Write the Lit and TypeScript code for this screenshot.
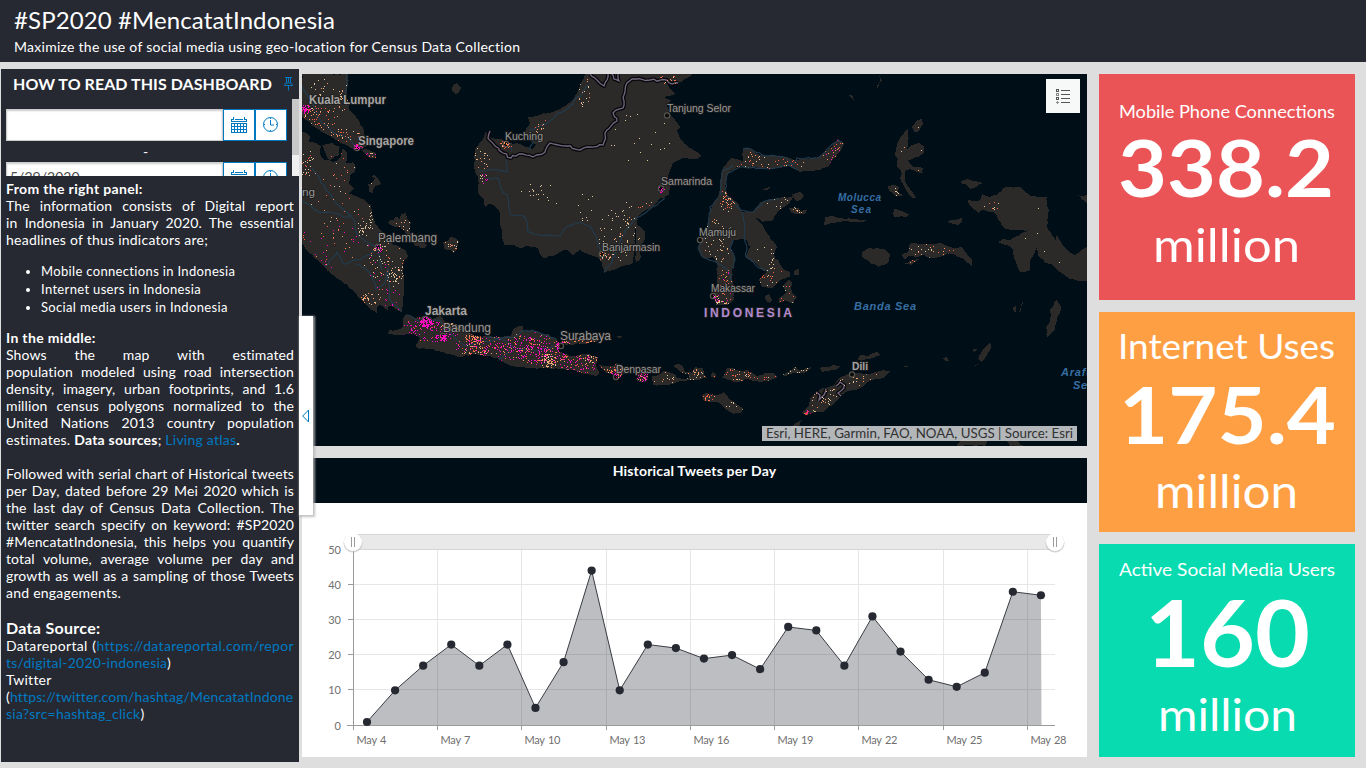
import { LitElement, html, svg, css } from "lit";
import { customElement } from "lit/decorators.js";

type Pt = [number, number];

/* Small deterministic generator, so that the map is the same on every load. */
function seeded(seed: number) {
  let s = seed >>> 0;
  return () => {
    s = (s * 1664525 + 1013904223) >>> 0;
    return s / 4294967296;
  };
}

function parse(s: string): Pt[] {
  return s.trim().split(/\s+/).map((p) => p.split(",").map(Number) as Pt);
}

/* Breaks straight runs into short irregular steps, as a coastline or a border has. */
function coast(s: string, seed: number, closed = true, jag = 1.7): string {
  const rnd = seeded(seed * 7919 + 13);
  const pts = parse(s);
  const out: Pt[] = [];
  pts.forEach((a, i) => {
    out.push(a);
    if (!closed && i === pts.length - 1) return;
    const b = pts[(i + 1) % pts.length];
    const len = Math.hypot(b[0] - a[0], b[1] - a[1]);
    const n = Math.max(1, Math.round(len / 3.5));
    for (let k = 1; k < n; k++) {
      const t = k / n;
      const j = len > 80 ? 0 : jag;
      out.push([a[0] + (b[0] - a[0]) * t + (rnd() - 0.5) * j, a[1] + (b[1] - a[1]) * t + (rnd() - 0.5) * j]);
    }
  });
  return "M" + out.map((p) => p[0].toFixed(1) + " " + p[1].toFixed(1)).join("L") + (closed ? "Z" : "");
}

const LAND = [
  // Malay peninsula
  "302,74 348,74 348,84 347,95 349,110 355,115 359,121 363,128 366,138 367,146 362,149 357,150 348,146 338,141 330,136 316,128 308,121 302,117",
  "362,150 369,150 376,153 376,158 371,158 365,154",
  // Sumatra
  "302,132 307,133 310,137 309,142 316,143 321,146 320,154 325,160 333,162 340,158 343,148 347,152 346,163 353,162 356,168 350,176 349,184 354,188 349,194 358,197 366,201 371,205 372,215 375,223 378,227 383,233 389,240 393,245 400,247 406,250 408,256 404,260 403,266 404,284 403,300 402,312 396,309 390,305 388,310 380,305 377,307 377,313 372,310 363,302 353,290 343,283 333,275 323,266 320,262 306,250 302,243",
  "322,145 332,143 340,147 338,156 330,160 325,152",
  "368,184 373,182 375,178 371,177 374,174 378,178 381,184 375,186 372,193 369,192",
  "388,223 395,217 400,219 401,214 406,213 407,218 411,222 410,230 414,238 422,241 427,245 424,248 415,246 410,238 405,232 400,227 395,227",
  "443,242 449,240 450,237 455,238 459,242 457,250 453,253 450,250 444,249",
  "453,85 457,83 461,88 459,93 455,94 452,89",
  // Borneo
  "585,74 590,74 693,74 687,78 677,83 668,85 672,90 675,94 664,98 671,100 667,106 670,113 675,120 681,127 677,131 680,139 690,148 697,152 702,156 697,159 683,158 673,163 669,173 668,180 670,187 669,195 660,198 655,205 643,212 637,217 637,223 635,237 634,250 633,263 620,267 604,273 602,263 597,257 590,255 580,250 573,255 567,250 560,252 553,256 543,258 540,255 538,248 529,246 522,248 514,245 504,245 502,230 500,223 499,210 495,206 489,204 485,207 484,200 478,192 478,180 474,167 475,150 483,140 485,132 492,138 503,140 512,144 520,144 532,149 536,144 532,143 525,132 530,123 528,117 540,115 560,109 567,105 575,96 580,85",
  "637,225 645,231 645,238 640,248 640,260 636,262 635,250",
  // Sulawesi
  "743,148 750,149 760,155 775,156 787,157 794,160 817,158 824,153 832,147 838,139 844,143 842,148 835,158 827,167 820,170 800,172 790,166 770,169 755,167 737,167 728,173 725,187 727,195 737,202 742,212 752,212 760,202 780,198 793,196 790,202 777,213 773,220 763,222 756,218 767,233 777,247 774,255 782,267 790,272 790,277 780,280 773,288 762,287 759,280 767,272 757,265 746,257 750,247 747,240 733,240 730,247 735,260 732,270 733,283 734,300 727,305 717,305 713,297 717,283 717,263 712,257 703,258 698,250 703,237 707,227 710,215 712,207 718,197 720,180 723,168 732,158 743,161",
  "783,286 789,280 792,283 792,292 797,297 793,303 786,300 779,303 779,298 786,292",
  "765,296 769,294 772,300 770,303 766,301",
  "794,271 799,269 799,275 794,275",
  "792,194 800,192 804,195 801,200 796,201",
  "789,208 795,207 800,211 807,210 805,214 796,214 791,213",
  "762,190 770,187 774,185 767,190",
  "825,217 832,216 839,218 852,219 868,221 852,222 840,222 832,223 824,225",
  // Java and Madura
  "406,314 415,318 425,316 433,319 440,316 447,323 463,325 468,333 478,336 487,337 503,337 511,336 513,329 519,326 523,326 524,332 532,330 541,334 548,334 555,338 559,343 559,352 570,356 577,356 588,354 598,358 596,366 599,373 596,376 584,374 574,370 560,369 545,368 530,368 512,366 500,360 497,358 480,355 473,354 458,357 447,354 443,352 433,349 417,348 416,345 420,338 413,334 403,335 388,334 389,330 397,330 403,327 403,320",
  "560,342 575,338 595,337 598,341 588,343 566,345",
  // Lesser Sunda islands
  "598,365 607,366 613,366 617,363 625,367 630,370 624,374 617,379 615,375 606,372",
  "635,374 641,371 648,373 648,380 645,382 636,380 638,377",
  "652,376 660,374 664,371 671,373 675,374 677,378 683,379 690,377 688,374 680,372 673,366 677,364 682,365 685,372 692,373 695,367 703,368 704,374 707,378 698,380 690,380 677,382 673,384 661,385 653,385",
  "712,372 716,376 714,378 711,377",
  "722,378 727,368 733,368 740,371 747,370 757,376 765,373 773,373 778,377 770,380 760,382 745,379 738,382 728,380",
  "782,375 790,371 795,367 799,370 806,368 812,367 807,372 798,373 791,374 786,376",
  "820,368 828,367 833,365 841,366 837,369 828,371 822,372",
  "702,395 707,393 716,395 724,392 731,400 743,408 740,413 734,414 727,410 717,402 704,401",
  "802,413 808,407 810,398 823,388 833,386 841,377 853,373 870,374 883,370 891,371 885,377 870,381 860,388 845,392 838,400 833,405 823,412 815,412 806,415",
  "790,427 796,423 802,420 799,426 794,429",
  "858,360 860,355 868,356 877,352 881,355 870,359 864,360",
  // Maluku islands
  "908,129 908,145 906,151 912,145 919,143 924,146 924,152 918,157 908,160 913,167 923,168 922,172 927,173 917,172 910,169 905,171 905,181 910,189 916,198 912,198 905,188 901,181 901,171 897,167 898,160 895,155 897,145 900,138 905,131",
  "912,127 917,120 922,119 923,124 918,132 914,132",
  "888,186 893,185 899,187 898,192 903,196 895,196 893,193 889,191",
  "894,209 902,211 911,215 906,217 894,217",
  "879,75 882,81 877,85 877,91 880,79",
  "849,95 852,95 854,101 851,98",
  "862,252 870,248 884,249 890,255 889,262 878,267 870,263 863,258",
  "902,254 908,252 911,243 925,244 941,243 953,248 961,247 967,254 972,260 972,266 965,261 955,255 947,253 942,256 932,258 924,255 918,257 909,256 905,259",
  "905,264 912,260 921,259 915,262 912,264",
  "947,222 955,220 962,218 962,222 958,225 953,224",
  "960,182 968,179 975,181 983,183 976,187 970,189 966,184",
  // Papua
  "968,200 976,201 981,199 982,194 990,197 997,195 1003,188 1011,187 1020,187 1030,196 1047,197 1047,206 1049,211 1047,220 1048,229 1056,241 1057,235 1061,242 1066,249 1075,255 1087,247 1087,281 1070,279 1060,272 1053,265 1045,263 1038,256 1037,247 1035,252 1030,262 1030,270 1020,272 1014,258 1013,250 1007,245 998,242 1003,239 1010,240 1020,235 1028,230 1015,230 1005,229 998,220 996,214 987,211 982,210 978,213 969,205",
  "1076,194 1082,196 1087,195 1087,203 1083,200",
  "1057,300 1061,309 1057,320 1055,330 1050,334 1047,337 1046,328 1050,320 1050,309",
  "1022,303 1024,300 1021,310 1019,312",
  "1013,307 1016,306 1016,312 1014,312",
  "990,342 991,348 987,355 982,362 978,359 983,349",
  "942,358 947,357 949,361 945,361",
  "903,366 912,366 905,367",
  "973,349 979,348 974,352",
  "972,368 979,364 974,367",
  "957,444 962,439 975,440 987,440 985,446 957,446",
  "1007,441 1015,440 1024,446 1010,446",
  "617,336 624,337 618,338",
];

const RIVERS = [
  "302,86 312,102 320,120 335,133 350,139 356,149",
  "347,74 346,90 342,100",
  "312,168 320,179 326,190 335,202 348,213 354,220 357,234 368,243 378,247 380,258 382,270",
  "302,201 310,205 320,213 332,212 343,217 352,215",
  "376,250 366,256 356,260 344,264 337,252 330,260 325,266",
  "356,264 365,268 372,276 376,289 384,284 388,268 390,300 402,311",
  "478,171 492,170 507,172 507,154",
  "487,178 499,179 500,186 508,198 510,214 525,217 528,232 540,235 560,236 567,226 580,222 590,226 597,240 604,257",
  "530,150 534,140 530,130 548,122 556,115 567,109 580,96 588,85",
  "507,141 512,152",
  "604,272 612,262 625,231 634,220 650,209 665,198",
  "743,149 751,149 762,155 787,158 792,165 797,158 818,158 838,140 843,143",
  "798,170 788,165 770,169 740,167 728,173 725,190",
  "718,198 710,207 709,227 704,239 698,248 704,258 716,262 728,270 732,283",
  "733,165 722,172 720,195",
  "727,196 741,210 753,212 763,202 779,198",
  "742,212 745,224 744,236 747,248 746,257 759,268 770,271",
  "733,240 730,248 735,260 733,269",
  "407,315 420,322 440,320 455,338 465,346 480,343 498,339 511,344 508,353 499,360",
  "486,337 501,338 513,338 522,331 532,330 548,336 557,340",
  "511,346 523,349 535,351 550,348 558,343",
];

const BORDERS = [
  "490,131 488,138 495,146 503,153 511,158 519,154 533,157 545,152 550,143 566,146 580,150 590,147 603,145 607,130 617,121 613,113 623,108 625,92 627,83 632,79 650,80 667,80 672,84 678,83",
  "590,74 597,80 604,86 608,74",
  "612,74 614,79 619,81 618,74",
  "816,392 820,395 819,400 824,395 826,389",
  "836,386 840,382 844,385 842,390 838,393 841,396",
];

/* x, y, spread x, spread y, amount, palette letters */
type Cluster = [number, number, number, number, number, string];
const CLUSTERS: Cluster[] = [
  [305, 109, 6, 5, 64, "mmmr"],
  [314, 118, 24, 12, 60, "torr"],
  [322, 95, 22, 20, 36, "tto"],
  [343, 98, 6, 16, 22, "to"],
  [335, 134, 24, 8, 40, "tor"],
  [357, 148, 6, 4, 40, "mmr"],
  [372, 154, 8, 4, 22, "trom"],
  [305, 162, 9, 14, 40, "ttr"],
  [340, 190, 40, 40, 52, "orrt"],
  [330, 242, 30, 26, 44, "orm"],
  [363, 228, 10, 8, 30, "tt"],
  [371, 208, 3, 16, 22, "tt"],
  [378, 248, 5, 4, 22, "otm"],
  [384, 262, 22, 28, 76, "orttm"],
  [395, 275, 8, 8, 34, "tt"],
  [367, 298, 14, 7, 44, "ot"],
  [391, 300, 12, 13, 18, "m"],
  [404, 226, 14, 12, 22, "to"],
  [452, 244, 8, 8, 18, "to"],
  [506, 144, 6, 5, 40, "toor"],
  [483, 178, 4, 5, 16, "ttm"],
  [482, 156, 8, 14, 20, "tto"],
  [541, 126, 7, 8, 12, "tor"],
  [538, 192, 18, 10, 18, "t"],
  [585, 90, 9, 18, 22, "to"],
  [620, 236, 22, 28, 60, "tto"],
  [604, 256, 7, 6, 20, "tro"],
  [648, 208, 10, 7, 12, "tor"],
  [640, 140, 30, 30, 18, "t"],
  [661, 189, 3, 3, 8, "m"],
  [668, 176, 3, 6, 6, "m"],
  [670, 79, 12, 6, 16, "tor"],
  [593, 213, 46, 30, 20, "t"],
  [426, 322, 6, 5, 100, "m"],
  [443, 337, 4, 4, 46, "m"],
  [430, 328, 30, 15, 150, "mmmmr"],
  [455, 326, 15, 4, 60, "to"],
  [475, 338, 11, 6, 80, "oor"],
  [475, 350, 14, 6, 46, "ort"],
  [500, 347, 46, 14, 210, "mmmmro"],
  [540, 348, 34, 16, 190, "mmmro"],
  [548, 361, 8, 8, 90, "to"],
  [560, 346, 4, 6, 56, "mm"],
  [578, 360, 22, 14, 150, "ormmr"],
  [591, 357, 8, 6, 34, "to"],
  [578, 340, 20, 4, 56, "oor"],
  [614, 370, 14, 8, 76, "tor"],
  [616, 375, 6, 5, 26, "m"],
  [642, 376, 8, 6, 50, "mmo"],
  [665, 378, 16, 7, 14, "to"],
  [695, 374, 14, 7, 36, "to"],
  [745, 375, 32, 7, 60, "torr"],
  [796, 371, 18, 5, 30, "t"],
  [707, 397, 7, 4, 18, "or"],
  [730, 405, 14, 8, 9, "t"],
  [824, 400, 20, 13, 50, "tto"],
  [860, 379, 26, 8, 22, "to"],
  [806, 413, 4, 3, 14, "rm"],
  [715, 300, 5, 6, 44, "mtt"],
  [725, 290, 12, 22, 60, "orm"],
  [722, 305, 10, 4, 36, "tt"],
  [718, 240, 16, 22, 62, "tto"],
  [727, 200, 8, 12, 44, "tor"],
  [776, 165, 40, 6, 36, "torr"],
  [755, 155, 10, 8, 14, "to"],
  [835, 150, 14, 14, 46, "rmo"],
  [780, 202, 14, 10, 16, "t"],
  [770, 262, 24, 24, 22, "t"],
  [770, 275, 14, 12, 26, "tor"],
  [787, 294, 10, 12, 22, "tr"],
  [798, 210, 10, 5, 16, "to"],
  [910, 150, 20, 30, 14, "to"],
  [898, 193, 10, 6, 12, "t"],
  [930, 249, 26, 8, 26, "tor"],
  [910, 262, 8, 3, 12, "or"],
  [990, 205, 10, 6, 9, "tr"],
  [1040, 225, 45, 45, 9, "t"],
];
const SWATCH: Record<string, string> = { t: "#dfc39a", o: "#f5905f", r: "#f75a3f", m: "#ff06c0" };

/* Groups the population pixels into one path for each colour. */
function population() {
  const rnd = seeded(2020);
  const d: Record<string, string> = { t: "", o: "", r: "", m: "" };
  for (const [cx, cy, rx, ry, n, mix] of CLUSTERS) {
    for (let i = 0; i < n; i++) {
      const a = rnd() * Math.PI * 2;
      const r = Math.pow(rnd(), 0.62);
      const x = Math.round(cx + Math.cos(a) * r * rx);
      const y = Math.round(cy + Math.sin(a) * r * ry);
      d[mix[Math.floor(rnd() * mix.length)]] += `M${x} ${y}h1v1h-1z`;
    }
  }
  return d;
}

type Label = [string, number, number, number, number, string];
const LABELS: Label[] = [
  ["Kuala Lumpur", 309, 104, 77, 12, "city big"],
  ["Singapore", 358, 145, 56, 12, "city big"],
  ["Kuching", 505, 140, 38, 11, "city"],
  ["Palembang", 378, 242, 59, 12, "city"],
  ["ng", 302, 196, 13, 11, "city"],
  ["Tanjung Selor", 667, 112, 64, 11, "city"],
  ["Samarinda", 661, 185, 51, 11, "city"],
  ["Banjarmasin", 602, 251, 58, 11, "city"],
  ["Mamuju", 699, 236, 37, 11, "city"],
  ["Makassar", 711, 292, 44, 11, "city"],
  ["Jakarta", 425, 315, 42, 12, "city big"],
  ["Bandung", 443, 332, 48, 12, "city"],
  ["Surabaya", 560, 340, 51, 12, "city"],
  ["Denpasar", 616, 373, 45, 11, "city"],
  ["Dili", 852, 370, 16, 11, "city big"],
  ["INDONESIA", 704, 317, 88, 12, "country"],
  ["Molucca", 838, 201, 43, 10, "sea"],
  ["Sea", 851, 213, 20, 10, "sea"],
  ["Banda Sea", 854, 310, 62, 11, "sea"],
  ["Arafura", 1061, 376, 44, 11, "sea"],
  ["Sea", 1073, 389, 21, 11, "sea"],
];

const TOWNS: Pt[] = [[357, 148], [506, 144], [378, 247], [667, 115.5], [661, 188.5], [602, 254], [700, 240], [713, 296], [425, 319], [443, 336], [561, 346], [616, 377], [852, 374.5]];

@customElement("population-map")
export class PopulationMap extends LitElement {
  static styles = css`
    :host { display: block; position: relative; background: #000e18; overflow: hidden; }
    svg { display: block; }
    .land { fill: #2b2a29; }
    .river { fill: none; stroke: #223c4e; stroke-width: 1.1; }
    .border-edge { fill: none; stroke: #08080c; stroke-width: 4; stroke-linejoin: round; }
    .border-line { fill: none; stroke: #75697f; stroke-width: 1.3; }
    .town { fill: #0b0b0b; stroke: #55544d; stroke-width: 1.2; }
    text { font-family: "Liberation Sans", Arial, sans-serif; paint-order: stroke; stroke: #1d1d1d; stroke-width: 2px; stroke-linejoin: round; }
    .city { fill: #979797; stroke-opacity: .85; }
    .big { font-weight: 700; fill: #a5a5a5; }
    .country { fill: #b08bd0; font-weight: 700; }
    .sea { fill: #376fa3; font-style: italic; font-weight: 700; stroke: #000e18; stroke-width: 1px; }
    .legend { position: absolute; right: 7px; top: 5px; width: 34px; height: 34px; background: #f7f8f8; display: grid; place-items: center; }
    .credits { position: absolute; right: 10px; bottom: 5px; height: 15px; width: 315px; background: rgba(255,255,255,.7); }
    .credits text { font-family: Lato, sans-serif; font-size: 12.5px; fill: #323232; stroke: none; }
  `;

  render() {
    const pop = population();
    const shapes = LAND.map((s, i) => coast(s, i + 1)).join("");
    return html`
      <svg width="785" height="372" viewBox="302 74 785 372">
        <defs><clipPath id="ground"><path d=${shapes} /></clipPath></defs>
        <path class="land" shape-rendering="crispEdges" d=${shapes} />
        ${RIVERS.map((r, i) => svg`<path class="river" d=${coast(r, i + 90, false, 2)} />`)}
        ${BORDERS.map((r, i) => {
          const d = coast(r, i + 60, false, 2.6);
          return svg`<path class="border-edge" d=${d} /><path class="border-line" d=${d} />`;
        })}
        ${TOWNS.map(([x, y]) => svg`<circle class="town" cx=${x} cy=${y} r="2.6" />`)}
        <g clip-path="url(#ground)" shape-rendering="crispEdges">
          ${Object.keys(pop).map((k) => svg`<path fill=${SWATCH[k]} d=${pop[k]} />`)}
        </g>
        ${LABELS.map(([t, x, y, w, size, cls]) => svg`<text class=${cls} x=${x} y=${y} font-size=${size} textLength=${w} lengthAdjust=${cls === "country" || cls === "sea" ? "spacing" : "spacingAndGlyphs"}>${t}</text>`)}
      </svg>
      <div class="legend">
        <svg width="16" height="16" viewBox="0 0 16 16" fill="none" stroke="#555" shape-rendering="crispEdges">
          <path d="M6 2.5h9M6 6.5h9M6 10.5h9M6 14.5h9" />
          <path d="M1.5 1.5h2v2h-2zM1.5 9.5h2v2h-2z" />
          <path stroke="#8b8b8b" d="M1.5 5.5h2v2h-2zM2.5 13v3M1 14.5h3" />
        </svg>
      </div>
      <div class="credits">
        <svg width="315" height="15"><text x="4" y="12" textLength="307" lengthAdjust="spacingAndGlyphs">Esri, HERE, Garmin, FAO, NOAA, USGS | Source: Esri</text></svg>
      </div>
    `;
  }
}

const TWEETS = [1, 10, 17, 23, 17, 23, 5, 18, 44, 10, 23, 22, 19, 20, 16, 28, 27, 17, 31, 21, 13, 11, 15, 38, 37];
const TICKS = [353.5, 437.5, 521.5, 606.5, 690.5, 774.5, 858.5, 943.5, 1027.5];

@customElement("tweet-chart")
export class TweetChart extends LitElement {
  static styles = css`
    :host { display: flex; flex-direction: column; background: #fff; }
    .title { height: 45px; background: #000e18; color: #fff; font: 700 14px/26px Lato, sans-serif; text-align: center; letter-spacing: .18px; }
    svg { display: block; }
    text { font: 11px Lato, sans-serif; fill: #6f6f6f; word-spacing: 1px; }
  `;

  render() {
    const y = (v: number) => 725.5 - v * 3.52;
    const pts = TWEETS.map((v, i) => [367 + i * 28.08, y(v)]);
    const line = pts.map((p) => p.join(",")).join(" ");
    return html`
      <div class="title">Historical Tweets per Day</div>
      <svg width="785" height="254" viewBox="302 503 785 254">
        <g stroke="#e6e6e6" shape-rendering="crispEdges">
          ${[10, 20, 30, 40].map((v) => svg`<path d="M353 ${Math.round(y(v)) - 0.5}H1055" />`)}
          ${TICKS.slice(1).map((x) => svg`<path d="M${x} 550V725" />`)}
        </g>
        <polygon points="367,725 ${line} 1041.5,725" fill="#262932" fill-opacity=".3" />
        <g stroke="#9b9b9b" shape-rendering="crispEdges">
          <path d="M353.5 550V726M347 725.5H1055" />
          ${[10, 20, 30, 40].map((v) => svg`<path d="M348 ${Math.round(y(v)) - 0.5}h5" />`)}
          ${TICKS.map((x) => svg`<path d="M${x} 725v5" />`)}
        </g>
        <polyline points=${line} fill="none" stroke="#3a3c44" />
        ${pts.map((p) => svg`<circle cx=${p[0]} cy=${p[1]} r="4.1" fill="#262932" />`)}
        <rect x="353.5" y="534.5" width="701" height="15" fill="#e9e9e9" stroke="#d6d6d6" />
        ${[353, 1055].map((x) => svg`
          <circle cx=${x} cy="543" r="9.6" fill="#b9b9b9" fill-opacity=".6" />
          <circle cx=${x} cy="542" r="9" fill="#fff" />
          <path d="M${x - 1.5} 537v10M${x + 1.5} 537v10" stroke="#9b9b9b" />`)}
        ${[0, 10, 20, 30, 40, 50].map((v) => svg`<text x="341" y=${y(v) + 4} text-anchor="end">${v}</text>`)}
        ${TICKS.map((x, i) => {
          const n = 4 + i * 3;
          return svg`<text x=${x + 3} y="744" textLength=${n < 10 ? 30 : 36}>${"May " + n}</text>`;
        })}
      </svg>
    `;
  }
}

interface Card {
  tone: string;
  h: number;
  /* text, left, baseline, width, size, weight */
  rows: [string, number, number, number, number, number][];
}
const CARDS: Card[] = [
  { tone: "red", h: 226, rows: [["Mobile Phone Connections", 20, 44, 216, 18, 400], ["338.2", 19, 123, 216, 79, 700], ["million", 54, 188, 147, 47, 400]] },
  { tone: "orange", h: 220, rows: [["Internet Uses", 19, 47, 217, 35, 400], ["175.4", 20, 132, 217, 79, 700], ["million", 56, 196, 143, 46, 400]] },
  { tone: "green", h: 213, rows: [["Active Social Media Users", 20, 32, 216, 18, 400], ["160", 46, 123, 165, 91, 700], ["million", 59, 187, 139, 45, 400]] },
];

type Line = [string, unknown];
const a = (t: string) => html`<a class="link">${t}</a>`;
const PANEL: Line[] = [
  ["strong", "From the right panel:"],
  ["full", "The information consists of Digital report"],
  ["full", "in Indonesia in January 2020. The essential"],
  ["", "headlines of thus indicators are;"],
  ["list", html`<ul class="items"><li>Mobile connections in Indonesia</li><li>Internet users in Indonesia</li><li>Social media users in Indonesia</li></ul>`],
  ["strong", "In the middle:"],
  ["full", "Shows the map with estimated"],
  ["full", "population modeled using road intersection"],
  ["full", "density, imagery, urban footprints, and 1.6"],
  ["full", "million census polygons normalized to the"],
  ["full", "United Nations 2013 country population"],
  ["", html`estimates. <b>Data sources</b>; ${a("Living atlas")}<b>.</b>`],
  ["", html`&nbsp;`],
  ["full", "Followed with serial chart of Historical tweets"],
  ["full", "per Day, dated before 29 Mei 2020 which is"],
  ["full", "the last day of Census Data Collection. The"],
  ["full", "twitter search specify on keyword: #SP2020"],
  ["full", "#MencatatIndonesia, this helps you quantify"],
  ["full", "total volume, average volume per day and"],
  ["full", "growth as well as a sampling of those Tweets"],
  ["", "and engagements."],
  ["", html`&nbsp;`],
  ["source", "Data Source:"],
  ["url", html`Datareportal (${a("https://datareportal.com/repor")}`],
  ["", html`${a("ts/digital-2020-indonesia")})`],
  ["", "Twitter"],
  ["tight", html`(${a("https://twitter.com/hashtag/MencatatIndone")}`],
  ["", html`${a("sia?src=hashtag_click")})`],
];

const calendar = svg`<svg width="18" height="18" viewBox="0 0 18 18" fill="none" stroke="#0079c1" shape-rendering="crispEdges">
  <path d="M1 3.5h2M5 3.5h8M15 3.5h2M1.5 3v3M16.5 3v3M1 5.5h16M3.5 1v3M14.5 1v3M1.5 7v10M1 16.5h16M16.5 7v10M4.5 7v10M7.5 7v10M10.5 7v10M13.5 7v10M1 7.5h16M1 10.5h16M1 13.5h16" />
</svg>`;
const clock = svg`<svg width="18" height="18" viewBox="0 0 18 18" fill="none" stroke="#0079c1">
  <circle cx="8.500" cy="8.500" r="7" /><path d="M8.500 4v5H12M8.500 2v1M8.500 14v1M2 8.500h1M14 8.500h1" />
</svg>`;

@customElement("app-root")
export class AppRoot extends LitElement {
  static styles = css`
    :host { display: flex; flex-direction: column; width: 1366px; height: 768px; overflow: hidden; background: #dedede; font-family: Lato, sans-serif; color: #fff; }
    .header { height: 62px; box-sizing: border-box; flex: none; background: #262932; padding: 5px 14px 0; }
    .title { font-size: 24px; line-height: 30px; font-weight: 400; letter-spacing: .1px; margin: 0; }
    .subtitle { font-size: 14px; line-height: 24px; letter-spacing: .27px; }
    .main { display: grid; grid-template-columns: 298px 785px 256px; padding-left: 1px; align-items: start; flex: 1; }
    .side { position: relative; margin-top: 7px; height: 693px; background: #262932; }
    .side-head { display: flex; align-items: center; height: 29px; padding: 0 4px 0 12px; justify-content: space-between; }
    .heading { font-size: 16px; font-weight: 700; white-space: nowrap; letter-spacing: .06px; }
    .filter { height: 78px; overflow: hidden; display: flex; justify-content: space-between; }
    .fields { padding: 11px 0 0 5px; }
    .field { display: flex; width: 281px; height: 32px; }
    .input { flex: 1; box-sizing: border-box; background: #fff; border: 1px solid #ccc; box-shadow: inset 0 1px 2px rgba(0,0,0,.2); color: #4c4c4c; font-size: 14px; line-height: 28px; padding-left: 3px; }
    .button { width: 32px; box-sizing: border-box; border: 1px solid #0079c1; background: #fff; display: grid; place-items: center; }
    .dash { height: 21px; line-height: 21px; text-align: center; font-size: 14px; width: 279px; }
    .track { width: 7px; background: #f0f0f0; margin-top: 1px; }
    .thumb { height: 56px; background: #c8c8c8; }
    .copy { padding: 4px 5px 0; font-size: 14px; width: 288px; letter-spacing: .24px; }
    .line { height: 17px; line-height: 17px; white-space: nowrap; }
    .full { text-align-last: justify; letter-spacing: .12px; }
    .url { text-align-last: justify; letter-spacing: .34px; }
    .tight { letter-spacing: .16px; }
    .strong { font-weight: 700; letter-spacing: .34px; }
    .source { font-weight: 700; font-size: 16px; letter-spacing: .3px; height: 19px; line-height: 19px; }
    .list { height: 81px; }
    .items { margin: 0; padding: 14px 0 0 35px; font-size: 13px; line-height: 18px; letter-spacing: .34px; }
    .link { color: #0079c1; }
    .collapse { position: absolute; left: 298px; top: 247px; width: 14px; height: 199px; background: #fff; box-shadow: 1px 1px 2px 1px rgba(180,180,180,.8); display: grid; place-items: center start; z-index: 2; }
    .arrow { margin-left: 3px; }
    .center { margin: 12px 0 0 3px; display: flex; flex-direction: column; gap: 12px; width: 785px; }
    .map { height: 372px; }
    .chart { height: 299px; }
    .right { margin: 12px 0 0 15px; display: flex; flex-direction: column; gap: 12px; width: 256px; }
    .card svg { display: block; }
    .card text { fill: #fff; }
    .red { background: #eb5456; }
    .orange { background: #ff9f44; }
    .green { background: #08dbb0; }
  `;

  render() {
    return html`
      <header class="header">
        <h1 class="title">#SP2020 #MencatatIndonesia</h1>
        <div class="subtitle">Maximize the use of social media using geo-location for Census Data Collection</div>
      </header>
      <main class="main">
        <aside class="side">
          <div class="side-head">
            <span class="heading">HOW TO READ THIS DASHBOARD</span>
            <svg width="14" height="16" viewBox="0 0 14 16" fill="none" stroke="#0079c1">
              <path d="M4 1.500h7M5.500 2v5M9.500 2v5M7.500 2v4M3.500 9.500v-1l1.500-1.500h5l1.500 1.500v1zM7.500 9.500v5" />
            </svg>
          </div>
          <div class="filter">
            <div class="fields">
              <div class="field"><div class="input"></div><div class="button">${calendar}</div><div class="button">${clock}</div></div>
              <div class="dash">-</div>
              <div class="field"><div class="input">5/29/2020</div><div class="button">${calendar}</div><div class="button">${clock}</div></div>
            </div>
            <div class="track"><div class="thumb"></div></div>
          </div>
          <div class="copy">${PANEL.map(([cls, t]) => html`<div class="line ${cls}">${t}</div>`)}</div>
          <div class="collapse">
            <svg class="arrow" width="8" height="14" viewBox="0 0 8 14" fill="none" stroke="#0079c1"><path d="M6.500 1v12L.7 7z" /></svg>
          </div>
        </aside>
        <section class="center">
          <population-map class="map"></population-map>
          <tweet-chart class="chart"></tweet-chart>
        </section>
        <section class="right">
          ${CARDS.map((c) => html`
            <div class="card ${c.tone}">
              <svg width="256" height=${c.h}>
                ${c.rows.map(([t, x, y, w, s, wt]) => svg`<text x=${x} y=${y} font-size=${s} font-weight=${wt} textLength=${w} lengthAdjust="spacingAndGlyphs">${t}</text>`)}
              </svg>
            </div>`)}
        </section>
      </main>
    `;
  }
}
